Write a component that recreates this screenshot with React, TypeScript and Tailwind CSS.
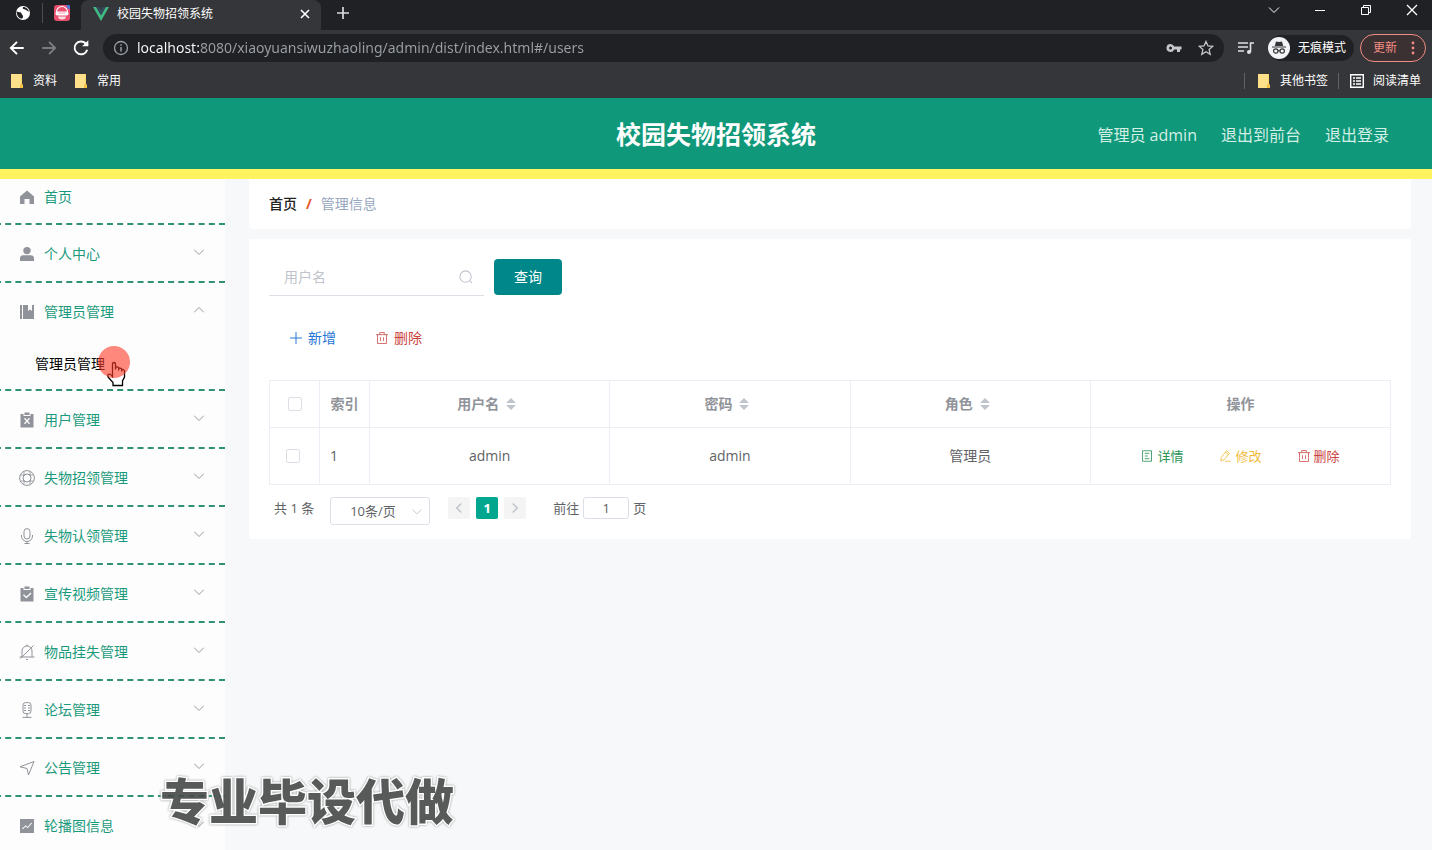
import React, { useState } from 'react';

type IconProps = { children: React.ReactNode; className?: string };

const Line = ({ children, className = 'size-4' }: IconProps) => (
  <svg viewBox="0 0 16 16" fill="none" stroke="currentColor" strokeWidth="1" className={`shrink-0 ${className}`} aria-hidden="true">
    {children}
  </svg>
);

const Solid = ({ children, className = 'size-4' }: IconProps) => (
  <svg viewBox="0 0 16 16" fill="currentColor" className={`shrink-0 ${className}`} aria-hidden="true">
    {children}
  </svg>
);

const TrashIcon = ({ className }: { className?: string }) => (
  <Line className={className}>
    <path d="M0 3.500h16M5 3.500V.7h6v2.800M2 3.500v11.800h12V3.500M6 7v5M10 7v5" />
  </Line>
);

const Folder = () => (
  <svg viewBox="0 0 13 15" className="h-[15px] w-[13px] shrink-0" aria-hidden="true">
    <path d="M1 0h11v10l1 1v3H1z" fill="#fbd66b" />
    <path d="M1 0h10v14H1z" fill="#ffe08a" />
    <path d="M10 10.500h2.500V14H10z" fill="#f3bd3a" />
  </svg>
);

const MENU = [
  {
    label: '个人中心',
    icon: (
      <Solid>
        <circle cx="8" cy="4.600" r="3.700" />
        <path d="M1 15v-2.500A3.300 3.300 0 0 1 4.300 9.300h7.400A3.300 3.300 0 0 1 15 12.500V15z" />
      </Solid>
    ),
  },
  {
    label: '管理员管理',
    icon: (
      <Solid>
        <path d="M1 1h2v14H1zM4 1h5v6l2-1.500L13 7V1h2v14H4z" />
      </Solid>
    ),
    children: ['管理员管理'],
  },
  {
    label: '用户管理',
    icon: (
      <Solid>
        <path fillRule="evenodd" d="M1.500 2h3v2h7V2h3v13.500h-13zM5 6.700 7.100 9 5 11.300l.9.900L8 9.900l2.100 2.300.9-.9L8.900 9 11 6.700l-.9-.9L8 8.100 5.900 5.800z" />
        <path d="M5.500.5h5V3h-5z" />
      </Solid>
    ),
  },
  {
    label: '失物招领管理',
    icon: (
      <Line>
        <circle cx="8" cy="8" r="7.400" />
        <circle cx="8" cy="8" r="4" />
        <path d="M5 1.500v4.200M11 1.500v4.200M5 10.300v4.200M11 10.300v4.200M1.500 5h4.200M1.500 11h4.200M10.300 5h4.200M10.300 11h4.200" strokeWidth=".8" />
      </Line>
    ),
  },
  {
    label: '失物认领管理',
    icon: (
      <Line>
        <rect x="5" y=".6" width="6" height="10.400" rx="3" />
        <path d="M2.500 7v1a5.500 5.500 0 0 0 11 0V7M8 13.500v2M5.500 15.500h5" />
      </Line>
    ),
  },
  {
    label: '宣传视频管理',
    icon: (
      <Solid>
        <path fillRule="evenodd" d="M1.500 2h3v2h7V2h3v13.500h-13zM4 9.200l3.300 3.200L12.500 7.400l-.9-.9-4.300 4-2.400-2.200z" />
        <path d="M5.500.5h5V3h-5z" />
      </Solid>
    ),
  },
  {
    label: '物品挂失管理',
    icon: (
      <Line>
        <path d="M3 13V7a5 5 0 0 1 10 0v6M.5 13h15M7 15.500h2M8 .5V2M1.500 14.500l13-13" />
      </Line>
    ),
  },
  {
    label: '论坛管理',
    icon: (
      <Line>
        <rect x="4" y=".6" width="8" height="11" rx="2.500" />
        <path d="M5 3.500h2M9 3.500h2M5 6h2M9 6h2M5 8.500h2M9 8.500h2M8 11.500v4M3.500 15.400h9" />
      </Line>
    ),
  },
  {
    label: '公告管理',
    icon: (
      <Line>
        <path d="M1 6.800 15 1.500 9.500 15 8 8.500z" />
      </Line>
    ),
  },
  {
    label: '轮播图信息',
    icon: (
      <Solid>
        <path fillRule="evenodd" d="M1 1h14v14H1zM3 10.500l.7.700 3-2.700 2 1.800L13 5.200l-.7-.7L8.700 9l-2-1.800z" />
      </Solid>
    ),
  },
];

const USERS = [{ id: 1, name: 'admin', password: 'admin', role: '管理员' }];

const BrowserBar = () => (
  <div className="shrink-0 bg-[#35363a] text-xs text-white">
    {/* tab strip */}
    <div className="flex h-[30px] bg-[#202124]">
      <div className="flex w-[81px] items-center rounded-br-lg pb-1 pl-[15px]">
        <Solid>
          <circle cx="8" cy="8" r="7" />
          <path d="M1.500 6.500c3 1.200 4.500 0 5 2s2 1.500 1.500 3.500-1 1.500-1.500 1.500C4 13.500 2 11 1.500 6.500zM8 2c-1 1.500.5 2.500 2 2.500s1.500 1.500 2.500 1.500 1.500 1 1.500 1.500C14 4.500 11.500 2 8 2z" fill="#202124" />
        </Solid>
        <span className="ml-[11px] h-5 w-px bg-[#4a4c50]" />
        <svg viewBox="0 0 16 16" className="ml-[11px] size-4" aria-hidden="true">
          <rect width="16" height="16" rx="3" fill="#e94f6c" />
          <path d="M12.500 0H15l1 1v3c-2 0-3.500-1-3.500-4z" fill="#4b7bdc" />
          <path d="M2.500 7a5.500 5.500 0 0 1 11 0" fill="none" stroke="#fff" strokeWidth="1.200" />
          <rect x="1.500" y="6.500" width="13" height="4" rx="2" fill="#fff" />
          <path d="M4 11.500h8a4 3 0 0 1-8 0z" fill="#fbdde2" />
          <path d="M4.500 8h7" stroke="#f2a0ae" strokeWidth="1" />
        </svg>
      </div>
      <div className="flex w-60 items-center rounded-t-lg bg-[#35363a] pr-2 pb-0.5 pl-3">
        <svg viewBox="0 0 16 14" className="h-[14px] w-4" aria-hidden="true">
          <path d="M0 0h3.200L8 8.300 12.800 0H16L8 14z" fill="#41b883" />
          <path d="M3.200 0h3L8 3.200 9.800 0h3L8 8.300z" fill="#35495e" />
        </svg>
        <span className="ml-2 grow leading-5">校园失物招领系统</span>
        <button type="button" aria-label="关闭标签页">
          <Line>
            <path d="M4 4l8 8M12 4l-8 8" strokeWidth="1.600" />
          </Line>
        </button>
      </div>
      <button type="button" className="ml-3.5 pb-1 text-[#d8d9db]" aria-label="新标签页">
        <Line>
          <path d="M8 2v12M2 8h12" strokeWidth="1.700" />
        </Line>
      </button>
      <div className="ml-auto flex gap-[30px] pr-3 pb-2.5">
        <button type="button" aria-label="搜索标签页">
          <Line><path d="M3 5.500l5 5 5-5" /></Line>
        </button>
        <button type="button" aria-label="最小化">
          <Line><path d="M3 8.500h10" /></Line>
        </button>
        <button type="button" aria-label="还原">
          <Line><path d="M3.500 5.500h7v7h-7zM5.500 5.500v-2h7v7h-2" /></Line>
        </button>
        <button type="button" aria-label="关闭">
          <Line><path d="M3 3l10 10M13 3L3 13" strokeWidth="1.300" /></Line>
        </button>
      </div>
    </div>

    {/* toolbar */}
    <div className="flex h-9 items-center pr-1.5 pl-2">
      <button type="button" aria-label="后退">
        <Line className="size-[18px]"><path d="M14 8H2.500M8 2.500L2.500 8 8 13.500" strokeWidth="1.700" /></Line>
      </button>
      <button type="button" aria-label="前进" className="ml-3.5 text-[#7b7c80]">
        <Line className="size-[18px]"><path d="M2 8h11.500M8 2.500L13.500 8 8 13.500" strokeWidth="1.700" /></Line>
      </button>
      <button type="button" aria-label="刷新" className="ml-3.5">
        <Line className="size-[18px]">
          <path d="M13.500 9.500A5.700 5.700 0 1 1 12.200 4L14 5.800" strokeWidth="1.700" />
          <path d="M14.500 1v5.500H9z" fill="currentColor" stroke="none" />
        </Line>
      </button>
      <div className="ml-[13px] flex h-7 grow items-center rounded-full bg-[#202124] px-2.5 text-[#9aa0a6]">
        <Line>
          <circle cx="8" cy="8" r="6.500" strokeWidth="1.300" />
          <path d="M8 7v4.500M8 4.300v1.500" strokeWidth="1.500" />
        </Line>
        <input
          type="text"
          aria-label="地址"
          defaultValue="localhost:8080/xiaoyuansiwuzhaoling/admin/dist/index.html#/users"
          className="ml-2 min-w-0 grow bg-[linear-gradient(90deg,#ffffff_62px,#9aa0a6_62px)] bg-clip-text font-['Noto_Sans',sans-serif] text-sm text-transparent outline-none"
        />
        <div className="flex gap-4 text-[#c4c7cb]">
          <Solid>
            <path fillRule="evenodd" d="M4.500 4a4 4 0 0 1 3.700 2.500H15.500v3H14V12h-3V9.500H8.200A4 4 0 1 1 4.500 4zm0 2.500a1.500 1.500 0 1 0 0 3 1.500 1.500 0 0 0 0-3z" />
          </Solid>
          <Line>
            <path d="M8 1.500l2 4.500 4.700.4-3.600 3.200 1.100 4.700L8 11.800l-4.200 2.500 1.100-4.700L1.300 6.400 6 6z" strokeWidth="1.300" />
          </Line>
        </div>
      </div>
      <Line className="ml-3.5 size-4 text-[#e0e1e3]">
        <path d="M0 3h10M0 7h10M0 11h6M12.500 12V3H16" strokeWidth="1.600" />
        <circle cx="11" cy="12" r="2" fill="currentColor" stroke="none" />
      </Line>
      <div className="ml-3.5 flex h-[26px] items-center rounded-full bg-[#202124] pr-2">
        <svg viewBox="0 0 22 22" className="size-[22px]" aria-hidden="true">
          <circle cx="11" cy="11" r="11" fill="#f1f3f4" />
          <path d="M8 4.500l3 .6 3-.6L15.200 9H6.800zM4 9.500h14v1H4z" fill="#35363a" />
          <g fill="none" stroke="#35363a" strokeWidth="1.200">
            <circle cx="7.800" cy="14" r="2.200" />
            <circle cx="14.200" cy="14" r="2.200" />
            <path d="M10 14q1-.8 2 0" />
          </g>
        </svg>
        <span className="ml-2">无痕模式</span>
      </div>
      <button type="button" className="ml-1.5 flex h-7 items-center rounded-full border border-[#f28b82] bg-[#3b3133] pr-1 pl-3 text-[#f28b82]">
        更新
        <Solid className="ml-2 size-4">
          <circle cx="8" cy="3" r="1.400" />
          <circle cx="8" cy="8" r="1.400" />
          <circle cx="8" cy="13" r="1.400" />
        </Solid>
      </button>
    </div>

    {/* bookmarks */}
    <div className="flex h-8 items-center pr-[11px] pb-0.5 pl-2.5">
      <a href="#data" className="flex items-center gap-2.5"><Folder />资料</a>
      <a href="#common" className="ml-[17px] flex items-center gap-2.5"><Folder />常用</a>
      <span className="ml-auto h-4 w-px bg-[#606266]" />
      <a href="#other" className="ml-3 flex items-center gap-2.5"><Folder />其他书签</a>
      <span className="ml-2.5 h-4 w-px bg-[#606266]" />
      <a href="#reading" className="ml-2.5 flex items-center gap-2">
        <Line>
          <path d="M1.700 1.700h12.600v12.600H1.700z" strokeWidth="1.400" />
          <path d="M4 5h2M7 5h5M4 8h2M7 8h5M4 11h2M7 11h5" strokeWidth="1.400" />
        </Line>
        阅读清单
      </a>
    </div>
  </div>
);

const Sidebar = () => {
  const [open, setOpen] = useState('管理员管理');

  return (
    <nav className="w-[225px] shrink-0 overflow-hidden bg-[#fdfdfd] text-sm text-[#1a9a7c]">
      <div className="-ml-[5px]">
        <a href="#home" className="flex h-[46px] items-center gap-2 border-b-2 border-dashed border-[#2f9277] pb-2 pl-[23px]">
          <Solid className="mx-px size-4 text-[#909399]">
            <path d="M8 1.500L15 7.500V15h-4.500v-5h-5v5H1V7.500z" />
          </Solid>
          首页
        </a>
        {MENU.map(item => (
          <div key={item.label} className="border-b-2 border-dashed border-[#2f9277]">
            <button
              type="button"
              className="flex h-14 w-full items-center gap-2 pt-0.5 pr-[21px] pl-[23px]"
              onClick={() => setOpen(open === item.label ? '' : item.label)}
            >
              <span className="mx-px text-[#909399]">{item.icon}</span>
              <span>{item.label}</span>
              <Line className="mb-1 ml-auto size-2.5 text-[#909399]">
                {open === item.label && item.children ? <path d="M0 12l8-8 8 8" strokeWidth="1.500" /> : <path d="M0 4l8 8 8-8" strokeWidth="1.500" />}
              </Line>
            </button>
            {open === item.label &&
              item.children?.map(child => (
                <a key={child} href="#users" className="flex h-[50px] items-center pl-10 text-black">
                  <span className="relative">
                    {child}
                    {/* pointer with click highlight */}
                    <svg viewBox="0 0 34 42" className="absolute -top-2 left-[62px] h-[42px] w-[34px]" aria-hidden="true">
                      <path
                        d="M15.500 30.500V17.500q1.500-2 3 0V23.500V21.500q1.700-1.300 3.200 0V24.500V22.500q1.500-1 3 .2V25.500V24q1.500-.8 2.800.6V31l-2 4v4.500h-9.500V36.500L11 31V28.500q2-1.500 4.500 2z"
                        fill="#fff"
                        stroke="#000"
                        strokeWidth="1.300"
                      />
                      <circle cx="17" cy="16" r="16" fill="#ff3a26" fillOpacity=".6" />
                    </svg>
                  </span>
                </a>
              ))}
          </div>
        ))}
      </div>
    </nav>
  );
};

const SortHead = ({ label }: { label: string }) => (
  <th className="border border-[#ebeef5] p-0 pr-1.5 font-bold">
    <button type="button" className="inline-flex items-center gap-[7px]">
      {label}
      <svg viewBox="0 0 10 12" className="h-3 w-2.5" fill="#c0c4cc" aria-hidden="true">
        <path d="M5 0l5 5H0zM5 12L0 7h10z" />
      </svg>
    </button>
  </th>
);

const CHECKBOX = 'block mx-auto size-3.5 appearance-none rounded-xs border border-[#dcdfe6] bg-white checked:bg-[#00a78e]';

const UserTable = () => (
  <table className="mt-8 w-full table-fixed border-collapse text-sm text-[#606266]">
    <thead>
      <tr className="h-[47px] text-[#909399]">
        <th className="w-[50px] border border-[#ebeef5] p-0">
          <input type="checkbox" aria-label="全选" className={CHECKBOX} />
        </th>
        <th className="w-[50px] border border-[#ebeef5] p-0 font-bold">索引</th>
        <SortHead label="用户名" />
        <SortHead label="密码" />
        <SortHead label="角色" />
        <th className="w-[300px] border border-[#ebeef5] p-0 font-bold">操作</th>
      </tr>
    </thead>
    <tbody>
      {USERS.map(user => (
        <tr key={user.id} className="h-[57px] text-center">
          <td className="border border-[#ebeef5] p-0 pr-1">
            <input type="checkbox" aria-label={`选择 ${user.name}`} className={CHECKBOX} />
          </td>
          <td className="border border-[#ebeef5] p-0 pl-2.5 text-left">{user.id}</td>
          <td className="border border-[#ebeef5] p-0">{user.name}</td>
          <td className="border border-[#ebeef5] p-0">{user.password}</td>
          <td className="border border-[#ebeef5] p-0">{user.role}</td>
          <td className="border border-[#ebeef5] p-0">
            <div className="flex justify-center gap-9 text-[13px]">
              <button type="button" className="flex items-center gap-1 text-[#2c9455]">
                <Line className="size-3">
                  <path d="M2 1h12v14H2zM5 4.500h6M5 8h4M5 11.500h6" strokeWidth="1.100" />
                </Line>
                详情
              </button>
              <button type="button" className="flex items-center gap-1 text-[#f0bb3c]">
                <Line className="size-3">
                  <path d="M10 1l4 3-7 9-4.500 1.500L3 10zM8.500 3l4 3M8 15h7.500" strokeWidth="1.100" />
                </Line>
                修改
              </button>
              <button type="button" className="flex items-center gap-1 text-[#cb4340]">
                <TrashIcon className="size-3" />
                删除
              </button>
            </div>
          </td>
        </tr>
      ))}
    </tbody>
  </table>
);

const Pagination = () => (
  <div className="mt-3 flex items-start pl-[5px] text-[13px] leading-[22px] text-[#606266]">
    <span>共 1 条</span>
    <div className="relative ml-4">
      <select aria-label="每页条数" className="h-7 w-[100px] appearance-none rounded-[3px] border border-[#dcdfe6] bg-white pl-[19px]">
        <option>10条/页</option>
        <option>20条/页</option>
      </select>
      <Line className="pointer-events-none absolute top-2.5 right-2 size-2.5 text-[#c0c4cc]">
        <path d="M1 4l7 7 7-7" strokeWidth="1.500" />
      </Line>
    </div>
    <div className="ml-[18px] flex gap-1.5">
      <button type="button" aria-label="上一页" className="flex size-[22px] items-center justify-center rounded-xs bg-[#f4f4f5] text-[#c0c4cc]">
        <Line className="size-3"><path d="M11 2L5 8l6 6" strokeWidth="2" /></Line>
      </button>
      <button type="button" className="size-[22px] rounded-xs bg-[#00a78e] font-bold text-white">1</button>
      <button type="button" aria-label="下一页" className="flex size-[22px] items-center justify-center rounded-xs bg-[#f4f4f5] text-[#c0c4cc]">
        <Line className="size-3"><path d="M5 2l6 6-6 6" strokeWidth="2" /></Line>
      </button>
    </div>
    <label className="ml-[27px] flex gap-1">
      前往
      <input type="text" defaultValue="1" className="h-[22px] w-[46px] rounded-[3px] border border-[#dcdfe6] text-center outline-none" />
      页
    </label>
  </div>
);

export default function App() {
  return (
    <div className="relative flex h-screen flex-col overflow-hidden bg-[#f6f8fa] font-['Open_Sans','Noto_Sans_CJK_SC',sans-serif]">
      <BrowserBar />

      <header className="grid h-[81px] shrink-0 grid-cols-[1fr_auto_1fr] items-center border-b-10 border-[#fff45f] bg-[#0f9879] pt-0.5">
        <h1 className="col-start-2 text-[25px] font-bold text-white">校园失物招领系统</h1>
        <div className="flex justify-end gap-6 pr-[43px] text-base text-[#d3efe6]">
          <span>管理员 admin</span>
          <a href="#front">退出到前台</a>
          <a href="#logout">退出登录</a>
        </div>
      </header>

      <div className="flex min-h-0 grow">
        <Sidebar />
        <main className="grow pr-[21px] pl-6">
          <div className="flex h-[50px] items-center gap-[9px] rounded-b bg-white px-5 text-sm">
            <a href="#home" className="font-medium text-[#222]">首页</a>
            <span className="font-bold text-[#e5562b]">/</span>
            <span className="text-[#97a8be]">管理信息</span>
          </div>

          <section className="mt-2.5 bg-white px-5 pt-5 pb-3.5 text-sm">
            <form className="flex gap-2.5" onSubmit={e => e.preventDefault()}>
              <div className="flex h-[37px] w-[215px] items-center border-b border-[#dcdfe6] pr-[11px] pl-[15px]">
                <input type="text" aria-label="用户名" placeholder="用户名" className="w-0 grow outline-none placeholder:text-[#c0c4cc]" />
                <Line className="size-3.5 text-[#c0c4cc]">
                  <circle cx="7.500" cy="7.500" r="6.500" strokeWidth="1.200" />
                  <path d="M12 12l3 3" strokeWidth="1.200" />
                </Line>
              </div>
              <button type="submit" className="h-9 w-[68px] rounded bg-[#008789] text-white">查询</button>
            </form>
            <div className="mt-8 flex gap-10 pl-[21px]">
              <button type="button" className="flex items-center gap-1.5 leading-5 text-[#1f76d8]">
                <Line className="size-3"><path d="M8 0v16M0 8h16" strokeWidth="1.300" /></Line>
                新增
              </button>
              <button type="button" className="flex items-center gap-1.5 leading-5 text-[#cb4340]">
                <TrashIcon className="size-3" />
                删除
              </button>
            </div>
            <UserTable />
            <Pagination />
          </section>
        </main>
      </div>

      {/* watermark */}
      <p className="pointer-events-none absolute bottom-3.5 left-40 text-[49px] leading-[70px] font-black text-[#474949] opacity-90 drop-shadow-[0_0_1px_#888] [-webkit-text-stroke:3px_white] [paint-order:stroke]">
        专业毕设代做
      </p>
    </div>
  );
}
